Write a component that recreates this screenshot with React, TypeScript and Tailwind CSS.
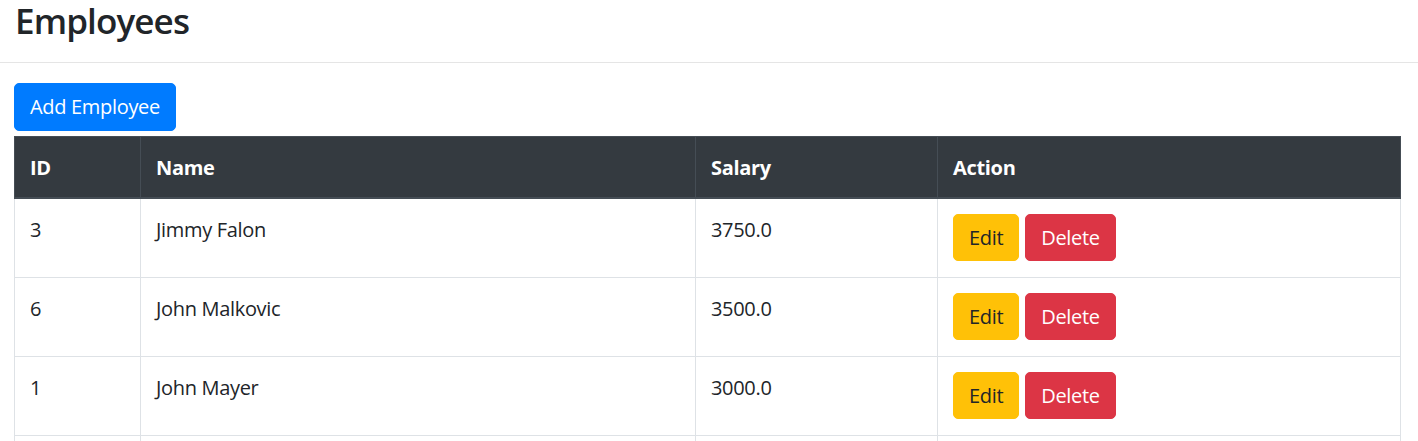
const employees = [
  { id: 3, name: 'Jimmy Falon', salary: '3750.0' },
  { id: 6, name: 'John Malkovic', salary: '3500.0' },
  { id: 1, name: 'John Mayer', salary: '3000.0' },
  { id: 2, name: 'Tom Cruise', salary: '2500.0' },
];

export default function App() {
  return (
    <div className="min-h-screen bg-white text-[#212529] tracking-[-0.02em] font-['Segoe_UI','Open_Sans','Noto_Sans',sans-serif]">
      <div className="h-[63px] border-b border-[#e5e5e5] px-[15px]">
        <h3 className="text-[35px] font-semibold leading-[1.2] tracking-[-0.025em]">Employees</h3>
      </div>

      <div className="pl-[14px] pr-[17px] pt-[20px]">
        <button className="h-[48px] px-[15px] text-[20px] leading-[30px] text-white bg-[#007bff] border border-[#007bff] rounded-[5px]">
          Add Employee
        </button>

        <table className="mt-[5px] w-full table-fixed border-collapse border border-[#dee2e6] text-[20px] leading-[30px]">
          <colgroup>
            <col className="w-[126px]" />
            <col className="w-[555px]" />
            <col className="w-[242px]" />
            <col />
          </colgroup>
          <thead>
            <tr className="bg-[#343a40] text-white">
              <th className="px-[15px] pt-[16px] pb-[14px] text-left font-bold border border-[#454d55] border-b-2">ID</th>
              <th className="px-[15px] pt-[16px] pb-[14px] text-left font-bold border border-[#454d55] border-b-2">Name</th>
              <th className="px-[15px] pt-[16px] pb-[14px] text-left font-bold border border-[#454d55] border-b-2">Salary</th>
              <th className="px-[15px] pt-[16px] pb-[14px] text-left font-bold border border-[#454d55] border-b-2">Action</th>
            </tr>
          </thead>
          <tbody>
            {employees.map(emp => (
              <tr key={emp.id}>
                <td className="px-[15px] pt-[16px] pb-[14px] align-top border border-[#dee2e6]">{emp.id}</td>
                <td className="px-[15px] pt-[16px] pb-[14px] align-top border border-[#dee2e6]">{emp.name}</td>
                <td className="px-[15px] pt-[16px] pb-[14px] align-top border border-[#dee2e6]">{emp.salary}</td>
                <td className="px-[15px] pt-[15px] pb-[16px] align-top border border-[#dee2e6]">
                  <div className="flex gap-[6px]">
                    <button className="h-[47px] px-[15px] text-[20px] leading-[30px] text-[#212529] bg-[#ffc107] border border-[#ffc107] rounded-[5px]">
                      Edit
                    </button>
                    <button className="h-[47px] px-[15px] text-[20px] leading-[30px] text-white bg-[#dc3545] border border-[#dc3545] rounded-[5px]">
                      Delete
                    </button>
                  </div>
                </td>
              </tr>
            ))}
          </tbody>
        </table>
      </div>
    </div>
  );
}
